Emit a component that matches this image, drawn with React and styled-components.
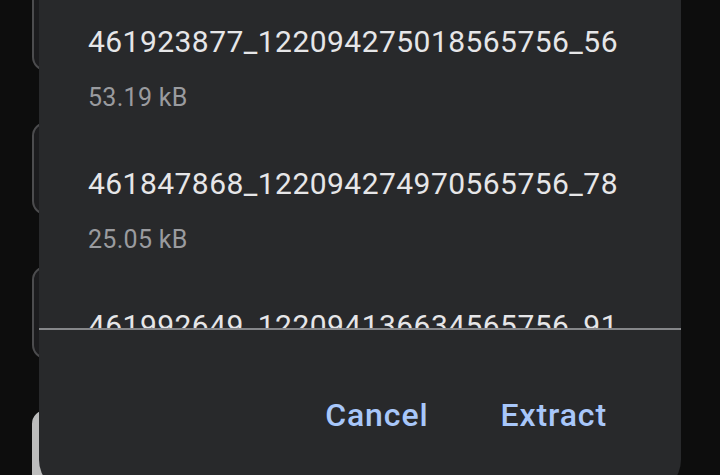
import React from "react";
import styled, { createGlobalStyle } from "styled-components";

const GlobalStyle = createGlobalStyle`
  html, body {
    margin: 0;
    padding: 0;
    background: #0d0d0d;
  }
  body {
    font-family: Roboto, "Open Sans", "Liberation Sans", sans-serif;
  }
`;

const Screen = styled.div`
  position: relative;
  width: 720px;
  height: 475px;
  overflow: hidden;
  background: #0d0d0d;
`;

const Page = styled.div`
  display: flex;
  flex-direction: column;
  gap: 51px;
  padding-left: 32px;
  margin-top: -22px;
`;

const Card = styled.div`
  width: 600px;
  height: 93px;
  box-sizing: border-box;
  border: 2px solid #4c4c4e;
  border-radius: 14px;
  background: #1c1c1e;
  ${(p) => p.$filled && `
    height: 120px;
    border-color: #bcbcbc;
    background: #bcbcbc;
  `}
`;

const Dialog = styled.div`
  position: absolute;
  top: 0;
  left: 39px;
  width: 642px;
  height: 492px;
  background: #28292b;
  border-radius: 0 0 32px 32px;
  display: flex;
  flex-direction: column;
`;

const FileList = styled.div`
  height: 328px;
  overflow: hidden;
`;

const FileItem = styled.div`
  padding: 24px 0 29px 49px;
`;

const FileName = styled.div`
  font-size: 30px;
  line-height: 36px;
  color: #e6e6e8;
  letter-spacing: 0.45px;
  white-space: nowrap;
`;

const FileSize = styled.div`
  margin-top: 23px;
  font-size: 25px;
  line-height: 30px;
  letter-spacing: 0.3px;
  color: #9a9b9f;
`;

const Divider = styled.div`
  height: 2px;
  background: #86878a;
`;

const Footer = styled.div`
  display: flex;
  justify-content: flex-end;
  gap: 72px;
  padding: 65px 74px 0 0;
`;

const TextButton = styled.button`
  border: none;
  background: none;
  padding: 0;
  font-family: inherit;
  font-size: 32px;
  font-weight: 500;
  line-height: 40px;
  letter-spacing: 0.9px;
  color: #a8c7fa;
  cursor: pointer;
`;

const files = [
  { id: 1, name: "461923877_122094275018565756_56", size: "53.19 kB" },
  { id: 2, name: "461847868_122094274970565756_78", size: "25.05 kB" },
  { id: 3, name: "461992649_122094136634565756_91", size: "31.42 kB" },
];

export default function App() {
  return (
    <Screen>
      <GlobalStyle />
      <Page>
        <Card />
        <Card />
        <Card />
        <Card $filled />
      </Page>
      <Dialog>
        <FileList>
          {files.map((f) => (
            <FileItem key={f.id}>
              <FileName>{f.name}</FileName>
              <FileSize>{f.size}</FileSize>
            </FileItem>
          ))}
        </FileList>
        <Divider />
        <Footer>
          <TextButton>Cancel</TextButton>
          <TextButton>Extract</TextButton>
        </Footer>
      </Dialog>
    </Screen>
  );
}
